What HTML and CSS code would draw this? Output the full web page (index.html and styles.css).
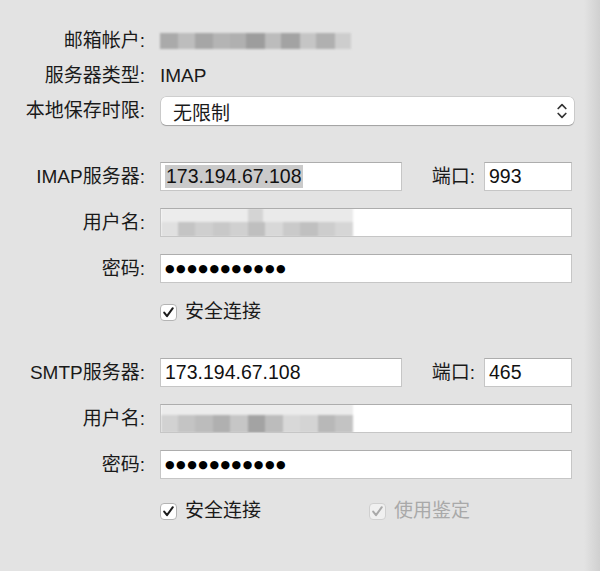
FILE: index.html
```html
<!DOCTYPE html>
<html lang="zh-CN">
<head>
    <meta charset="UTF-8">
    <meta name="viewport" content="width=device-width, initial-scale=1.0">
    <title>帐户信息</title>
    <link rel="stylesheet" href="styles.css">
</head>
<body>
    <div class="panel">
        <div class="row info">
            <span class="label">邮箱帐户:</span>
            <div class="mosaic mosaic-account"></div>
        </div>
        <div class="row info">
            <span class="label">服务器类型:</span>
            <span class="value">IMAP</span>
        </div>
        <div class="row info">
            <span class="label">本地保存时限:</span>
            <div class="select">
                <span>无限制</span>
                <svg class="chevrons" width="10" height="18" viewBox="0 0 10 18">
                    <path d="M1.2 6.5 L5 2.7 L8.8 6.5 M1.2 11.5 L5 15.3 L8.8 11.5" fill="none" stroke="#333" stroke-width="1.7" stroke-linecap="round" stroke-linejoin="round"/>
                </svg>
            </div>
        </div>

        <!-- incoming -->
        <div class="section">
            <div class="row field">
                <span class="label">IMAP服务器:</span>
                <div class="input host"><span class="selected">173.194.67.108</span></div>
                <span class="port-label">端口:</span>
                <div class="input port">993</div>
            </div>
            <div class="row field">
                <span class="label">用户名:</span>
                <div class="input wide">
                    <div class="mosaic mosaic-user">
                        <div class="mosaic-top"></div>
                        <div class="mosaic-bottom"></div>
                    </div>
                </div>
            </div>
            <div class="row field">
                <span class="label">密码:</span>
                <div class="input wide"><span class="dots">●●●●●●●●●●●</span></div>
            </div>
            <div class="row check-row">
                <span class="label"></span>
                <label class="check">
                    <span class="box">
                        <svg width="15" height="15" viewBox="0 0 15 15"><path d="M3.2 7.6 L6 11.2 L11.8 3.2" fill="none" stroke="#1c1c1c" stroke-width="2" stroke-linecap="round" stroke-linejoin="round"/></svg>
                    </span>
                    安全连接
                </label>
            </div>
        </div>

        <!-- outgoing -->
        <div class="section second">
            <div class="row field">
                <span class="label">SMTP服务器:</span>
                <div class="input host">173.194.67.108</div>
                <span class="port-label">端口:</span>
                <div class="input port">465</div>
            </div>
            <div class="row field">
                <span class="label">用户名:</span>
                <div class="input wide">
                    <div class="mosaic mosaic-smtp">
                        <div class="mosaic-top"></div>
                        <div class="mosaic-bottom"></div>
                    </div>
                </div>
            </div>
            <div class="row field">
                <span class="label">密码:</span>
                <div class="input wide"><span class="dots">●●●●●●●●●●●</span></div>
            </div>
            <div class="row check-row last">
                <span class="label"></span>
                <label class="check">
                    <span class="box">
                        <svg width="15" height="15" viewBox="0 0 15 15"><path d="M3.2 7.6 L6 11.2 L11.8 3.2" fill="none" stroke="#1c1c1c" stroke-width="2" stroke-linecap="round" stroke-linejoin="round"/></svg>
                    </span>
                    安全连接
                </label>
                <label class="check disabled">
                    <span class="box">
                        <svg width="15" height="15" viewBox="0 0 15 15"><path d="M3.2 7.6 L6 11.2 L11.8 3.2" fill="none" stroke="#a9a9a9" stroke-width="2" stroke-linecap="round" stroke-linejoin="round"/></svg>
                    </span>
                    使用鉴定
                </label>
            </div>
        </div>
    </div>
</body>
</html>
```

FILE: styles.css
```css
html {
    background: linear-gradient(to right, #e3e3e3 0, #e3e3e3 584px, #d0d0d0 600px);
}

body {
    margin: 0;
    font-family: "Liberation Sans", "Noto Sans CJK SC", sans-serif;
    font-size: 19px;
    color: #1a1a1a;
}

.panel {
    width: 600px;
    box-sizing: border-box;
    padding: 27px 28px 0 0;
}

.row {
    display: flex;
    align-items: center;
}

.label {
    flex: none;
    width: 145px;
    margin-right: 15px;
    text-align: right;
    line-height: 22px;
}

.info {
    height: 28px;
    margin-bottom: 7px;
}

.value {
    line-height: 22px;
}

/* popup button */
.select {
    flex: none;
    width: 413px;
    height: 28px;
    margin-left: 1px;
    box-sizing: border-box;
    padding: 0 7px 0 12px;
    display: flex;
    align-items: center;
    justify-content: space-between;
    background: #fff;
    border-radius: 5px;
    box-shadow: 0 0 0 0.5px rgba(0, 0, 0, 0.18), 0 1px 1px rgba(0, 0, 0, 0.22);
}

.section {
    margin-top: 37px;
}

.section.second {
    margin-top: 32px;
}

.field {
    height: 29px;
}

.field + .field {
    margin-top: 17px;
}

.input {
    height: 29px;
    box-sizing: border-box;
    display: flex;
    align-items: center;
    padding: 0 4px;
    background: #fff;
    border: 1px solid #c6c6c6;
    border-top-color: #adadad;
    font-size: 19.5px;
    color: #111;
    overflow: hidden;
}

.host {
    width: 242px;
}

.port-label {
    flex: 1;
    text-align: right;
    padding-right: 9px;
    line-height: 22px;
}

.port {
    width: 88px;
}

.wide {
    flex: 1;
    padding-left: 0;
}

.selected {
    background: #cacaca;
    line-height: 23px;
    padding: 0 1px;
}

.dots {
    font-family: "DejaVu Sans", sans-serif;
    font-size: 11px;
    letter-spacing: 1.5px;
    color: #000;
    padding-left: 4px;
}

/* blurred account names */
.mosaic {
    filter: blur(1.3px);
}

.mosaic-account {
    width: 191px;
    height: 16px;
    background: linear-gradient(to right,
        #aaaaaa 0 18px, #bdbdbd 18px 35px, #a6a6a6 35px 53px, #b4b4b4 53px 70px,
        #b0b0b0 70px 86px, #9d9d9d 86px 105px, #bcbcbc 105px 121px, #a3a3a3 121px 140px,
        #c5c5c5 140px 156px, #b0b0b0 156px 175px, #cdcdcd 175px 191px);
}

.mosaic-user,
.mosaic-smtp {
    width: 192px;
    height: 29px;
    display: flex;
    flex-direction: column;
}

.mosaic-top {
    height: 14px;
}

.mosaic-bottom {
    flex: 1;
}

.mosaic-user .mosaic-top {
    background: linear-gradient(to right,
        #ececec 0 87px, #d4d4d4 87px 102px, #eaeaea 102px 192px);
}

.mosaic-user .mosaic-bottom {
    background: linear-gradient(to right,
        #e0e0e0 0 17px, #c4c4c4 17px 34px, #cfcfcf 34px 52px, #c8c8c8 52px 69px,
        #d0d0d0 69px 87px, #bfbfbf 87px 104px, #d8d8d8 104px 122px, #cacaca 122px 139px,
        #c0c0c0 139px 157px, #cdcdcd 157px 174px, #d6d6d6 174px 192px);
}

.mosaic-smtp .mosaic-top {
    height: 11px;
    background: #ececec;
}

.mosaic-smtp .mosaic-bottom {
    background: linear-gradient(to right,
        #d2d2d2 0 17px, #c4c4c4 17px 34px, #bcbcbc 34px 52px, #b0b0b0 52px 69px,
        #c6c6c6 69px 87px, #a3a3a3 87px 104px, #bcbcbc 104px 122px, #d8d8d8 122px 139px,
        #d4d4d4 139px 157px, #b8b8b8 157px 174px, #c3c3c3 174px 192px);
}

/* checkboxes */
.check-row {
    height: 28px;
    margin-top: 15px;
}

.check-row.last {
    margin-top: 18px;
}

.check {
    display: flex;
    align-items: center;
    line-height: 22px;
}

.check + .check {
    margin-left: 108px;
}

.box {
    width: 17px;
    height: 17px;
    box-sizing: border-box;
    margin-right: 8px;
    display: flex;
    align-items: center;
    justify-content: center;
    background: #fff;
    border: 1px solid #b4b4b4;
    border-radius: 4px;
}

.check.disabled {
    color: #a9a9a9;
}

.check.disabled .box {
    background: #f0f0f0;
    border-color: #d0d0d0;
}
```
